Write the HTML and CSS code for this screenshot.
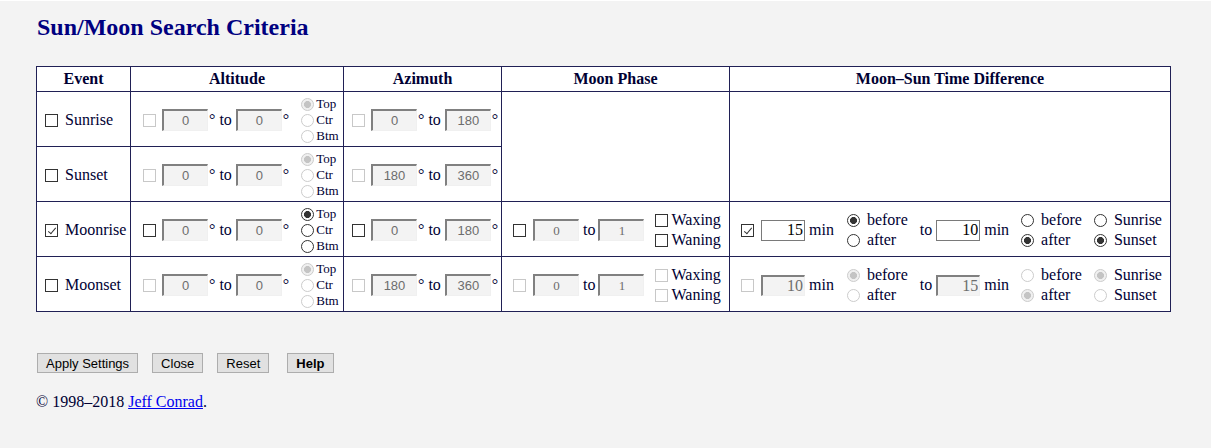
FILE: index.html
```html
<!DOCTYPE html>
<html lang="en">
<head>
<meta charset="utf-8">
<title>Sun/Moon Search Criteria</title>
<link rel="stylesheet" href="styles.css">
</head>
<body>
<div class="page">
  <h1 class="title">Sun/Moon Search Criteria</h1>
  <table class="criteria">
    <colgroup>
      <col class="c-event"><col class="c-alt"><col class="c-az"><col class="c-phase"><col class="c-diff">
    </colgroup>
    <thead>
      <tr><th>Event</th><th>Altitude</th><th>Azimuth</th><th>Moon Phase</th><th>Moon–Sun Time Difference</th></tr>
    </thead>
    <tbody>
      <tr>
        <td><label class="event"><input type="checkbox" class="cb">Sunrise</label></td>
        <td>
          <div class="alt">
            <input type="checkbox" class="cb" disabled>
            <input type="text" class="num" value="0" disabled><span class="deg">°</span>
            <span class="to">to</span>
            <input type="text" class="num" value="0" disabled><span class="deg">°</span>
            <div class="pos">
              <label><input type="radio" class="rd" name="p1" checked disabled>Top</label>
              <label><input type="radio" class="rd" name="p1" disabled>Ctr</label>
              <label><input type="radio" class="rd" name="p1" disabled>Btm</label>
            </div>
          </div>
        </td>
        <td>
          <div class="az">
            <input type="checkbox" class="cb" disabled>
            <input type="text" class="num" value="0" disabled><span class="deg">°</span>
            <span class="to">to</span>
            <input type="text" class="num" value="180" disabled><span class="deg">°</span>
          </div>
        </td>
        <td rowspan="2"></td>
        <td rowspan="2"></td>
      </tr>
      <tr>
        <td><label class="event"><input type="checkbox" class="cb">Sunset</label></td>
        <td>
          <div class="alt">
            <input type="checkbox" class="cb" disabled>
            <input type="text" class="num" value="0" disabled><span class="deg">°</span>
            <span class="to">to</span>
            <input type="text" class="num" value="0" disabled><span class="deg">°</span>
            <div class="pos">
              <label><input type="radio" class="rd" name="p2" checked disabled>Top</label>
              <label><input type="radio" class="rd" name="p2" disabled>Ctr</label>
              <label><input type="radio" class="rd" name="p2" disabled>Btm</label>
            </div>
          </div>
        </td>
        <td>
          <div class="az">
            <input type="checkbox" class="cb" disabled>
            <input type="text" class="num" value="180" disabled><span class="deg">°</span>
            <span class="to">to</span>
            <input type="text" class="num" value="360" disabled><span class="deg">°</span>
          </div>
        </td>
      </tr>
      <tr>
        <td><label class="event"><input type="checkbox" class="cb" checked>Moonrise</label></td>
        <td>
          <div class="alt">
            <input type="checkbox" class="cb">
            <input type="text" class="num" value="0" readonly><span class="deg">°</span>
            <span class="to">to</span>
            <input type="text" class="num" value="0" readonly><span class="deg">°</span>
            <div class="pos">
              <label><input type="radio" class="rd" name="p3" checked>Top</label>
              <label><input type="radio" class="rd" name="p3">Ctr</label>
              <label><input type="radio" class="rd" name="p3">Btm</label>
            </div>
          </div>
        </td>
        <td>
          <div class="az">
            <input type="checkbox" class="cb">
            <input type="text" class="num" value="0" readonly><span class="deg">°</span>
            <span class="to">to</span>
            <input type="text" class="num" value="180" readonly><span class="deg">°</span>
          </div>
        </td>
        <td>
          <div class="phase">
            <input type="checkbox" class="cb">
            <input type="text" class="num serif" value="0" readonly>
            <span class="to">to</span>
            <input type="text" class="num serif" value="1" readonly>
            <div class="waxwan">
              <label><input type="checkbox" class="cb">Waxing</label>
              <label><input type="checkbox" class="cb">Waning</label>
            </div>
          </div>
        </td>
        <td>
          <div class="diff">
            <input type="checkbox" class="cb" checked>
            <input type="text" class="mins" value="15">
            <span class="min">min</span>
            <div class="opts first">
              <label><input type="radio" class="rd" name="a3" checked>before</label>
              <label><input type="radio" class="rd" name="a3">after</label>
            </div>
            <span class="to to-diff">to</span>
            <input type="text" class="mins" value="10">
            <span class="min">min</span>
            <div class="opts">
              <label><input type="radio" class="rd" name="b3">before</label>
              <label><input type="radio" class="rd" name="b3" checked>after</label>
            </div>
            <div class="opts sun">
              <label><input type="radio" class="rd" name="s3">Sunrise</label>
              <label><input type="radio" class="rd" name="s3" checked>Sunset</label>
            </div>
          </div>
        </td>
      </tr>
      <tr>
        <td><label class="event"><input type="checkbox" class="cb">Moonset</label></td>
        <td>
          <div class="alt">
            <input type="checkbox" class="cb" disabled>
            <input type="text" class="num" value="0" disabled><span class="deg">°</span>
            <span class="to">to</span>
            <input type="text" class="num" value="0" disabled><span class="deg">°</span>
            <div class="pos">
              <label><input type="radio" class="rd" name="p4" checked disabled>Top</label>
              <label><input type="radio" class="rd" name="p4" disabled>Ctr</label>
              <label><input type="radio" class="rd" name="p4" disabled>Btm</label>
            </div>
          </div>
        </td>
        <td>
          <div class="az">
            <input type="checkbox" class="cb" disabled>
            <input type="text" class="num" value="180" disabled><span class="deg">°</span>
            <span class="to">to</span>
            <input type="text" class="num" value="360" disabled><span class="deg">°</span>
          </div>
        </td>
        <td>
          <div class="phase">
            <input type="checkbox" class="cb" disabled>
            <input type="text" class="num serif" value="0" disabled>
            <span class="to">to</span>
            <input type="text" class="num serif" value="1" disabled>
            <div class="waxwan">
              <label><input type="checkbox" class="cb" disabled>Waxing</label>
              <label><input type="checkbox" class="cb" disabled>Waning</label>
            </div>
          </div>
        </td>
        <td>
          <div class="diff">
            <input type="checkbox" class="cb" disabled>
            <input type="text" class="mins" value="10" disabled>
            <span class="min">min</span>
            <div class="opts first">
              <label><input type="radio" class="rd" name="a4" checked disabled>before</label>
              <label><input type="radio" class="rd" name="a4" disabled>after</label>
            </div>
            <span class="to to-diff">to</span>
            <input type="text" class="mins" value="15" disabled>
            <span class="min">min</span>
            <div class="opts">
              <label><input type="radio" class="rd" name="b4" disabled>before</label>
              <label><input type="radio" class="rd" name="b4" checked disabled>after</label>
            </div>
            <div class="opts sun">
              <label><input type="radio" class="rd" name="s4" checked disabled>Sunrise</label>
              <label><input type="radio" class="rd" name="s4" disabled>Sunset</label>
            </div>
          </div>
        </td>
      </tr>
    </tbody>
  </table>

  <div class="buttons">
    <button type="button" class="btn">Apply Settings</button>
    <button type="button" class="btn">Close</button>
    <button type="button" class="btn">Reset</button>
    <button type="button" class="btn help">Help</button>
  </div>

  <p class="copy">© 1998–2018 <a href="#">Jeff Conrad</a>.</p>
</div>
</body>
</html>
```

FILE: styles.css
```css
html {
  background: #ffffff;
  height: 100%;
}

body {
  margin: 1px 2px 0 0;
  min-height: calc(100% - 1px);
  background: #f3f3f3;
  font-family: "Liberation Serif", "Times New Roman", serif;
  font-size: 16px;
  color: #000033;
}

.page {
  padding: 13px 0 0 36px;
}

.title {
  margin: 0;
  padding-left: 1px;
  font-size: 24px;
  line-height: 27px;
  font-weight: bold;
  color: #000080;
}

/* table */
.criteria {
  margin-top: 25px;
  border-collapse: collapse;
  table-layout: fixed;
  width: 1134px;
  background: #ffffff;
}

.c-event { width: 94px; }
.c-alt { width: 213px; }
.c-az { width: 158px; }
.c-phase { width: 228px; }
.c-diff { width: 441px; }

.criteria th {
  border: 1px solid #202055;
  padding: 3px 0;
  line-height: 18px;
  font-weight: bold;
  text-align: center;
}

.criteria td {
  border: 1px solid #202055;
  padding: 2px 0 0;
  height: 52px;
  vertical-align: middle;
}

/* controls */
.cb {
  appearance: none;
  -webkit-appearance: none;
  width: 13px;
  height: 13px;
  margin: 0;
  flex: none;
  border: 1px solid #333333;
  background: #ffffff;
  position: relative;
}

.cb:disabled {
  border-color: #c8c8c8;
}

.cb:checked::after {
  content: "";
  position: absolute;
  left: 3.5px;
  top: 1px;
  width: 3px;
  height: 7px;
  border-right: 1px solid #333333;
  border-bottom: 1px solid #333333;
  transform: rotate(40deg);
}

.rd {
  appearance: none;
  -webkit-appearance: none;
  width: 13px;
  height: 13px;
  margin: 0;
  flex: none;
  border: 1px solid #333333;
  border-radius: 50%;
  background: #ffffff;
}

.rd:checked {
  background: radial-gradient(circle, #333333 0 3.2px, #ffffff 3.8px);
}

.rd:disabled {
  border-color: #cccccc;
}

.rd:disabled:checked {
  background: radial-gradient(circle, #c4c4c4 0 3.2px, #f0f0f0 3.8px);
}

.num {
  box-sizing: border-box;
  width: 46px;
  height: 22px;
  margin: 0;
  padding: 0;
  flex: none;
  border-style: solid;
  border-width: 2px 1px 1px 2px;
  border-color: #808080 #f0f0f0 #f0f0f0 #808080;
  background: #f3f3f3;
  color: #6d6d6d;
  font-family: "Liberation Sans", Arial, sans-serif;
  font-size: 13px;
  text-align: center;
}

.num.serif {
  font-family: "Liberation Serif", "Times New Roman", serif;
}

.mins {
  box-sizing: border-box;
  width: 44px;
  height: 21px;
  margin: 0;
  padding: 0 1px 0 0;
  flex: none;
  border: 1px solid #7a7a7a;
  background: #ffffff;
  color: #000000;
  font-family: "Liberation Serif", "Times New Roman", serif;
  font-size: 16px;
  text-align: right;
}

.mins:disabled {
  border-width: 2px 1px 1px 2px;
  border-color: #808080 #f0f0f0 #f0f0f0 #808080;
  background: #f3f3f3;
  color: #6d6d6d;
}

/* cells */
.event {
  display: flex;
  align-items: center;
  gap: 7px;
  padding-left: 8px;
}

.alt,
.az,
.phase,
.diff {
  display: flex;
  align-items: center;
}

.alt { padding-left: 12px; }
.az { padding-left: 8px; }
.phase { padding-left: 11px; }
.diff { padding-left: 11px; }

.alt .cb,
.az .cb { margin-right: 6px; }
.phase .cb,
.diff > .cb { margin-right: 7px; }

.deg {
  margin-left: 1px;
  line-height: 18px;
}

.to {
  margin: 0 3px 0 4px;
}

.alt .to,
.az .to {
  margin: 0 4px 0 4px;
}

.pos {
  display: flex;
  flex-direction: column;
  margin-left: 12px;
  font-size: 13px;
}

.pos label {
  display: flex;
  align-items: center;
  gap: 2px;
  height: 16px;
}

.waxwan {
  display: flex;
  flex-direction: column;
  margin-left: 11px;
}

.waxwan label {
  display: flex;
  align-items: center;
  height: 20px;
}

.waxwan .cb {
  margin-right: 3px;
}

.min {
  margin-left: 4px;
}

.opts {
  display: flex;
  flex-direction: column;
  margin-left: 12px;
}

.opts.first { margin-left: 13px; }
.opts.sun { margin-left: 12px; }

.opts label {
  display: flex;
  align-items: center;
  gap: 7px;
  height: 20px;
}

.to-diff {
  margin: 0 4px 0 12px;
}

/* buttons */
.buttons {
  display: flex;
  margin-top: 41px;
  padding-left: 1px;
}

.btn {
  height: 20px;
  margin: 0 14px 0 0;
  padding: 0 8px;
  border: 1px solid #adadad;
  background: #e1e1e1;
  color: #000000;
  font-family: "Liberation Sans", Arial, sans-serif;
  font-size: 13px;
}

.btn.help {
  margin-left: 4px;
  font-weight: bold;
}

.copy {
  margin: 20px 0 0;
  line-height: 18px;
}

.copy a {
  color: #0000ee;
}
```
